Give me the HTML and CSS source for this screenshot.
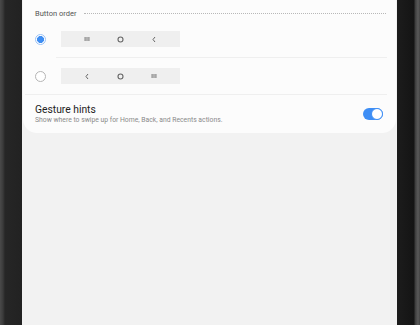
FILE: index.html
```html
<!DOCTYPE html>
<html lang="en">
<head>
    <meta charset="UTF-8">
    <meta name="viewport" content="width=device-width, initial-scale=1.0">
    <title>Navigation bar</title>
    <link rel="stylesheet" href="styles.css">
</head>
<body>
    <div class="device">
        <div class="bezel bezel-left"></div>
        <div class="screen">
            <div class="card">
                <div class="section-head">
                    <span>Button order</span>
                    <div class="dots"></div>
                </div>
                <div class="option first">
                    <span class="radio checked"></span>
                    <div class="nav-bar">
                        <svg width="6" height="6" viewBox="0 0 6 6"><rect x="0.5" y="1" width="1.2" height="4" fill="#888"/><rect x="2.4" y="1" width="1.2" height="4" fill="#888"/><rect x="4.3" y="1" width="1.2" height="4" fill="#888"/></svg>
                        <svg width="7" height="7" viewBox="0 0 7 7"><circle cx="3.5" cy="3.5" r="2.5" fill="none" stroke="#666" stroke-width="1.1"/></svg>
                        <svg width="6" height="7" viewBox="0 0 6 7"><path d="M4 1 L2 3.5 L4 6" fill="none" stroke="#666" stroke-width="1"/></svg>
                    </div>
                </div>
                <div class="divider inset"></div>
                <div class="option">
                    <span class="radio"></span>
                    <div class="nav-bar">
                        <svg width="6" height="7" viewBox="0 0 6 7"><path d="M4 1 L2 3.5 L4 6" fill="none" stroke="#666" stroke-width="1"/></svg>
                        <svg width="7" height="7" viewBox="0 0 7 7"><circle cx="3.5" cy="3.5" r="2.5" fill="none" stroke="#666" stroke-width="1.1"/></svg>
                        <svg width="6" height="6" viewBox="0 0 6 6"><rect x="0.5" y="1" width="1.2" height="4" fill="#888"/><rect x="2.4" y="1" width="1.2" height="4" fill="#888"/><rect x="4.3" y="1" width="1.2" height="4" fill="#888"/></svg>
                    </div>
                </div>
                <div class="divider"></div>
                <div class="setting">
                    <div class="setting-text">
                        <div class="setting-title">Gesture hints</div>
                        <div class="setting-desc">Show where to swipe up for Home, Back, and Recents actions.</div>
                    </div>
                    <span class="switch"><span class="knob"></span></span>
                </div>
            </div>
        </div>
        <div class="bezel bezel-right"></div>
    </div>
</body>
</html>
```

FILE: styles.css
```css
html, body {
    margin: 0;
    height: 100%;
}
body {
    font-family: Roboto, "Liberation Sans", Arial, sans-serif;
    background: #1e1e1e;
}
.device {
    display: flex;
    height: 325px;
}
.bezel-left {
    width: 22px;
    background: linear-gradient(to right, #4a4a4a 0, #3a3a3a 3px, #262626 5px, #222 22px);
}
.bezel-right {
    width: 23px;
    background: linear-gradient(to right, #1c1c1c 0, #141414 17px, #3a3a3a 18px, #5a5a5a 21px, #444 23px);
}
.screen {
    flex: 1;
    background: #f2f2f2;
}
.card {
    background: #fcfcfc;
    margin: 0 1px;
    border-radius: 0 0 14px 14px;
}
.section-head {
    display: flex;
    align-items: center;
    height: 26px;
    padding: 0 10px 0 12px;
    gap: 8px;
    font-size: 7.5px;
    color: #555;
}
.dots {
    flex: 1;
    border-top: 1px dotted #b8b8b8;
    margin-top: 1px;
}
.option {
    display: flex;
    align-items: center;
    padding: 10px 0 10px 12px;
}
.option.first {
    padding-top: 5px;
}
.radio {
    width: 9px;
    height: 9px;
    border: 1px solid #b5b5b5;
    border-radius: 50%;
    margin-right: 15px;
    box-sizing: content-box;
    background: #fff;
}
.radio.checked {
    border-color: #9cc3f5;
    background: radial-gradient(circle, #3f8ef2 0, #3f8ef2 3.2px, #fff 3.8px);
}
.nav-bar {
    width: 119px;
    height: 16px;
    background: #efefef;
    display: flex;
    align-items: center;
    justify-content: center;
    gap: 27px;
}
.nav-bar svg {
    display: block;
}
.divider {
    height: 1px;
    background: #efefef;
    margin: 0 9px 0 2px;
}
.divider.inset {
    margin-left: 33px;
}
.setting {
    display: flex;
    align-items: center;
    padding: 8px 13px 8px 12px;
}
.setting-text {
    flex: 1;
}
.setting-title {
    font-size: 10.3px;
    color: #222;
    line-height: 13px;
}
.setting-desc {
    font-size: 6.8px;
    color: #8a8a8a;
    line-height: 9px;
}
.switch {
    position: relative;
    width: 20px;
    height: 12px;
    border-radius: 6px;
    background: #3e8ef5;
}
.knob {
    position: absolute;
    right: 0;
    top: 0;
    width: 10px;
    height: 10px;
    border: 1px solid #3e8ef5;
    border-radius: 50%;
    background: #fff;
}
```
